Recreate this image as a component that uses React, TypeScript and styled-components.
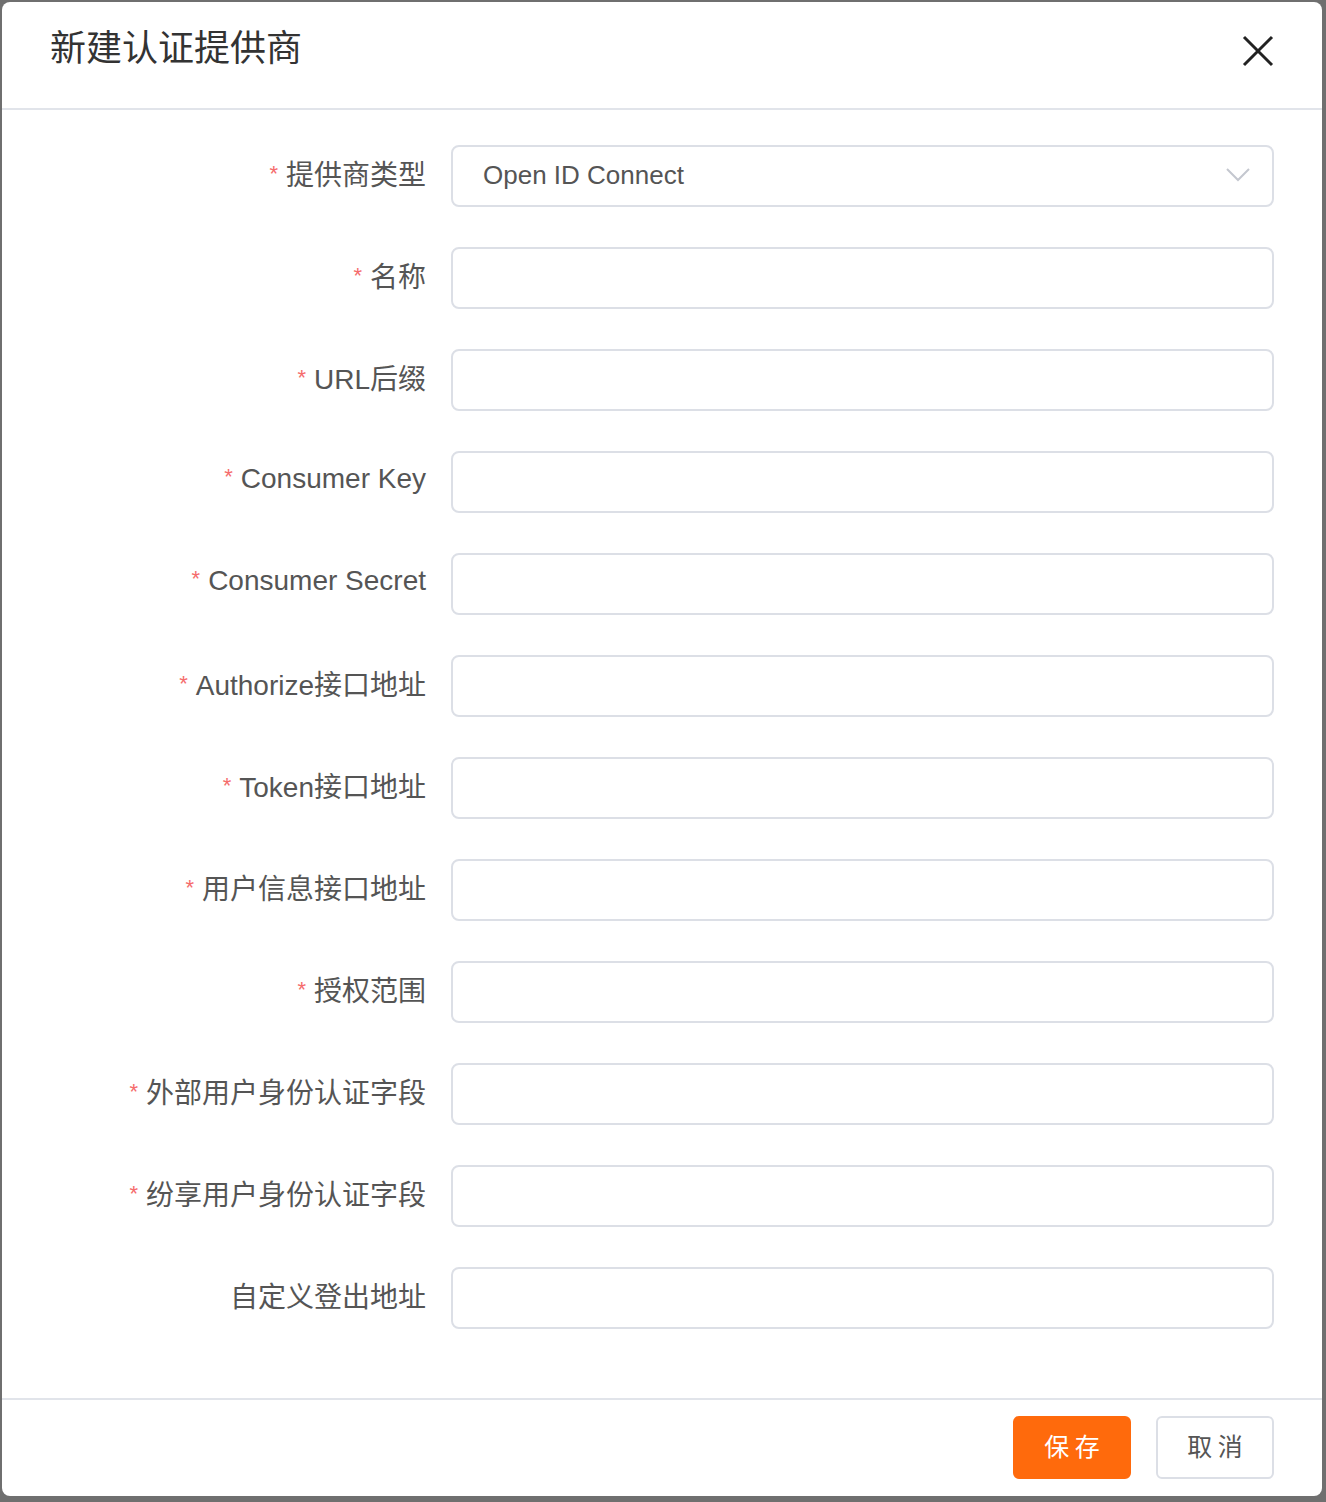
import React from "react";
import styled, { createGlobalStyle } from "styled-components";

const GlobalStyle = createGlobalStyle`
    html, body {
        margin: 0;
        padding: 0;
        background: #6f6f6f;
    }
    body {
        font-family: "Liberation Sans", "Noto Sans CJK SC", sans-serif;
    }
    * {
        box-sizing: border-box;
    }
`;

const fields = [
    { label: "名称", required: true },
    { label: "URL后缀", required: true },
    { label: "Consumer Key", required: true },
    { label: "Consumer Secret", required: true },
    { label: "Authorize接口地址", required: true },
    { label: "Token接口地址", required: true },
    { label: "用户信息接口地址", required: true },
    { label: "授权范围", required: true },
    { label: "外部用户身份认证字段", required: true },
    { label: "纷享用户身份认证字段", required: true },
    { label: "自定义登出地址", required: false },
];

const App = () => {
    return (
        <Page>
            <GlobalStyle />
            <Dialog>
                <DialogHeader>
                    <Title>新建认证提供商</Title>
                    <CloseButton aria-label="close">
                        <svg width="32" height="32" viewBox="0 0 32 32">
                            <path
                                d="M2 2 L30 30 M30 2 L2 30"
                                stroke="#222"
                                strokeWidth="3"
                                fill="none"
                            />
                        </svg>
                    </CloseButton>
                </DialogHeader>
                <DialogBody>
                    <FormRow>
                        <Label>
                            <Star>*</Star>提供商类型
                        </Label>
                        <SelectBox>
                            <span>Open ID Connect</span>
                            <svg width="24" height="14" viewBox="0 0 24 14">
                                <path
                                    d="M1 1 L12 12 L23 1"
                                    stroke="#c4c7cf"
                                    strokeWidth="2"
                                    fill="none"
                                />
                            </svg>
                        </SelectBox>
                    </FormRow>
                    {fields.map((f) => (
                        <FormRow key={f.label}>
                            <Label>
                                {f.required && <Star>*</Star>}
                                {f.label}
                            </Label>
                            <Input />
                        </FormRow>
                    ))}
                </DialogBody>
                <DialogFooter>
                    <Button primary>保 存</Button>
                    <Button>取 消</Button>
                </DialogFooter>
            </Dialog>
        </Page>
    );
};

const Page = styled.div`
    padding: 2px 4px 6px 2px;
    width: 1326px;
    height: 1502px;
`;

const Dialog = styled.div`
    width: 1320px;
    height: 1494px;
    background: #fff;
    border-radius: 8px;
    display: flex;
    flex-direction: column;
    overflow: hidden;
`;

const DialogHeader = styled.div`
    height: 108px;
    flex: none;
    display: flex;
    justify-content: space-between;
    align-items: flex-start;
    padding: 25px 50px 0 48px;
    border-bottom: 2px solid #e1e4ea;
`;

const Title = styled.div`
    font-size: 36px;
    line-height: 44px;
    color: #333;
`;

const CloseButton = styled.div`
    width: 32px;
    height: 32px;
    margin-top: 8px;
    margin-right: -2px;
    cursor: pointer;
    display: flex;
`;

const DialogBody = styled.div`
    flex: 1;
    padding: 35px 48px 0 24px;
    display: flex;
    flex-direction: column;
    gap: 40px;
`;

const FormRow = styled.div`
    display: grid;
    grid-template-columns: 400px 1fr;
    column-gap: 25px;
    align-items: center;
`;

const Label = styled.label`
    text-align: right;
    font-size: 28px;
    color: #555;
    white-space: nowrap;
    margin-top: -6px;
`;

const Star = styled.span`
    color: #f56c6c;
    font-size: 22px;
    margin-right: 8px;
    vertical-align: 4px;
`;

const fieldBox = `
    height: 62px;
    width: 100%;
    border: 2px solid #dcdfe6;
    border-radius: 8px;
    background: #fff;
    padding: 0 30px;
    font-size: 26px;
    color: #555;
    font-family: "Liberation Sans", "Noto Sans CJK SC", sans-serif;
`;

const Input = styled.input`
    ${fieldBox}
    outline: none;
`;

const SelectBox = styled.div`
    ${fieldBox}
    display: flex;
    align-items: center;
    justify-content: space-between;
    padding-right: 22px;
    padding-bottom: 2px;
`;

const DialogFooter = styled.div`
    flex: none;
    height: 98px;
    border-top: 2px solid #e1e4ea;
    display: flex;
    justify-content: flex-end;
    align-items: flex-start;
    gap: 25px;
    padding: 16px 48px 0 0;
`;

const Button = styled.button<{ primary?: boolean }>`
    width: 118px;
    height: 63px;
    border-radius: 6px;
    font-size: 25px;
    font-family: "Noto Sans CJK SC", sans-serif;
    padding: 0 0 5px;
    cursor: pointer;
    border: 2px solid ${({ primary }) => (primary ? "#ff6a0c" : "#dcdfe6")};
    background: ${({ primary }) => (primary ? "#ff6a0c" : "#fff")};
    color: ${({ primary }) => (primary ? "#fff" : "#555")};
`;

export default App;
